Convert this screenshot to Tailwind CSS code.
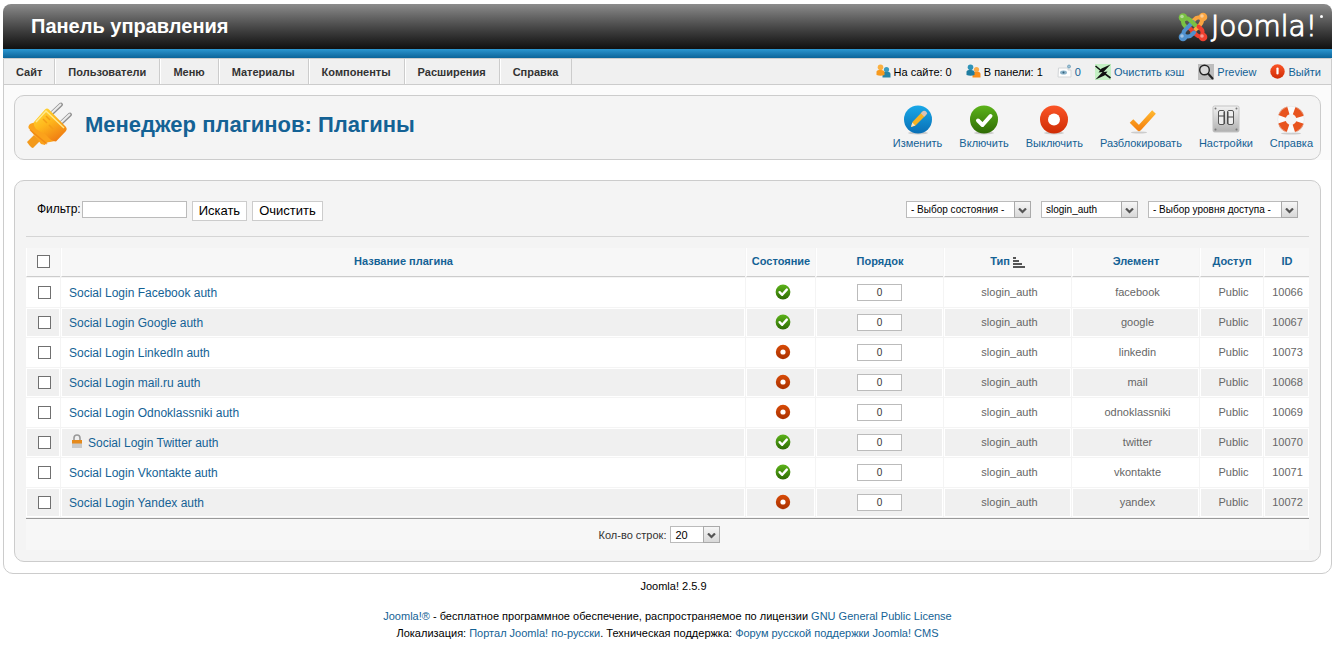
<!DOCTYPE html>
<html lang="ru">
<head>
<meta charset="utf-8">
<title>Менеджер плагинов: Плагины</title>
<script src="https://cdn.jsdelivr.net/npm/@tailwindcss/browser@4"></script>
</head>
<body class="bg-white pt-1 pr-[2px] pl-[3px] font-['Liberation_Sans',Arial,sans-serif] text-[11px] leading-4 text-black">

<svg class="absolute size-0" aria-hidden="true">
  <defs>
    <linearGradient id="gGreen" x1="0" y1="0" x2="0" y2="1"><stop offset="0" stop-color="#5cb31a"/><stop offset="1" stop-color="#2f6b04"/></linearGradient>
    <linearGradient id="gRed" x1="0" y1="0" x2="0" y2="1"><stop offset="0" stop-color="#fb5527"/><stop offset="1" stop-color="#cf2c05"/></linearGradient>
    <linearGradient id="gRust" x1="0" y1="0" x2="0" y2="1"><stop offset="0" stop-color="#d84a06"/><stop offset="1" stop-color="#a93202"/></linearGradient>
    <linearGradient id="gBlue" x1="0" y1="0" x2="0" y2="1"><stop offset="0" stop-color="#18a8e8"/><stop offset="1" stop-color="#0a6fb5"/></linearGradient>
    <linearGradient id="gOrange" x1="0" y1="0" x2="0" y2="1"><stop offset="0" stop-color="#ffb52e"/><stop offset="1" stop-color="#f58410"/></linearGradient>
    <linearGradient id="gYellow" x1="0" y1="0" x2="0.6" y2="1"><stop offset="0" stop-color="#ffdc3c"/><stop offset="0.5" stop-color="#ffb81c"/><stop offset="1" stop-color="#f07f13"/></linearGradient>
    <linearGradient id="gSteel" x1="0" y1="0" x2="0" y2="1"><stop offset="0" stop-color="#f2f2f2"/><stop offset="1" stop-color="#b0b0b0"/></linearGradient>
    <symbol id="published" viewBox="0 0 16 16"><circle cx="8" cy="8" r="7.4" fill="url(#gGreen)"/><path d="M4.6 8.2 7.2 10.8 11.8 5.6" fill="none" stroke="#fff" stroke-width="2.4" stroke-linecap="round" stroke-linejoin="round"/></symbol>
    <symbol id="disabled" viewBox="0 0 16 16"><circle cx="8" cy="8" r="7.2" fill="url(#gRust)"/><circle cx="8" cy="8" r="2.6" fill="#fff"/></symbol>
    <symbol id="chevron" viewBox="0 0 9 6"><path d="M1 .5 4.500 4 8 .5" fill="none" stroke="#555" stroke-width="2.200"/></symbol>
  </defs>
</svg>

<header class="flex h-[45px] items-center justify-between rounded-t-lg bg-linear-to-b from-[#8c8c8c] to-[#111111] pr-[9px] pl-7">
  <h1 class="pb-0.5 text-xl font-bold text-white">Панель управления</h1>
  <a href="#" class="flex items-center gap-[3px] text-white" aria-label="Joomla!">
    <svg class="size-[30px]" viewBox="0 0 30 30" fill="none" stroke-width="4" stroke-linecap="round" stroke-linejoin="round">
      <path d="M5 6 V10 Q5 12 7 14 L9 16 M5 7.500 Q9 5 12 8 L20 16" stroke="#7ac143"/>
      <path d="M24 5.500 H20 Q18 5.500 16 8 L14 10 M23.500 6 Q25 10 22 13 L14.500 20.500" stroke="#f9a541"/>
      <path d="M25 24.500 Q21 25.500 18 22.500 L10.500 15 M24.500 24 V21 Q25 18 22 16 L20.500 14.500" stroke="#f0402f"/>
      <path d="M5.500 24.500 Q4.500 20 8 17 L15 10 M6 24.500 H9 Q12 25 14 22.500 L16 20.500" stroke="#5091cd"/>
      <path d="M12 8 L17 13" stroke="#7ac143"/>
      <circle cx="5" cy="5.500" r="4.300" fill="#7ac143"/><circle cx="25" cy="5" r="4.300" fill="#f9a541"/>
      <circle cx="25" cy="25" r="4.300" fill="#f0402f"/><circle cx="5" cy="25" r="4.300" fill="#5091cd"/>
      <g fill="#fff" opacity=".45"><circle cx="4" cy="4.500" r="1.800"/><circle cx="24" cy="4" r="1.800"/><circle cx="24" cy="24" r="1.800"/><circle cx="4" cy="24" r="1.800"/></g>
    </svg>
    <span class="font-['DejaVu_Sans',sans-serif] text-[28px] leading-8 font-extralight [-webkit-text-stroke:1px_white]">Joomla!</span>
    <span class="mt-1 size-[3px] self-start rounded-full bg-white"></span>
  </a>
</header>
<div class="h-[9px] bg-linear-to-b from-[#2c97d1] to-[#0b6499]"></div>

<div class="rounded-b-[10px] border border-[#cccccc] bg-white">
  <div class="flex h-[26px] items-stretch justify-between border-b border-[#cccccc] bg-[#f0f0f0]">
    <nav class="flex font-bold text-[#333333]">
      <a href="#" class="flex items-center border-r border-[#cccccc] pr-3 pl-3">Сайт</a>
      <a href="#" class="flex items-center border-r border-l border-r-[#cccccc] border-l-white pr-[13px] pl-3">Пользователи</a>
      <a href="#" class="flex items-center border-r border-l border-r-[#cccccc] border-l-white pr-[13px] pl-3">Меню</a>
      <a href="#" class="flex items-center border-r border-l border-r-[#cccccc] border-l-white pr-[13px] pl-3">Материалы</a>
      <a href="#" class="flex items-center border-r border-l border-r-[#cccccc] border-l-white pr-[13px] pl-3">Компоненты</a>
      <a href="#" class="flex items-center border-r border-l border-r-[#cccccc] border-l-white pr-[13px] pl-3">Расширения</a>
      <a href="#" class="flex items-center border-r border-l border-r-[#cccccc] border-l-white pr-[13px] pl-3">Справка</a>
    </nav>
    <div class="flex items-center gap-[14px] pr-[10px]">
      <span class="flex items-center gap-[3px]">
        <svg class="size-[15px]" viewBox="0 0 15 15"><path d="M6.500 13.500V9.500Q6.500 7.500 10.500 7.500T14.500 10V13.500Z" fill="#2585a8"/><circle cx="10.500" cy="5.500" r="2.600" fill="#3a9cc0"/><path d="M.5 11V7.500Q1 5.500 4 6 8 5.500 8.500 8V11Q4.500 12.500.5 11Z" fill="#f79a1e"/><circle cx="4.500" cy="3.300" r="2.800" fill="#fbb040"/></svg>На сайте: 0</span>
      <span class="flex items-center gap-[3px]">
        <svg class="size-[15px]" viewBox="0 0 15 15"><path d="M6.500 13.500V9.500Q6.500 7.500 10.500 7.500T14.500 10V13.500Z" fill="#f98e1b"/><circle cx="10.500" cy="5.500" r="2.600" fill="#fbac4b"/><path d="M.5 11V7.500Q1 5.500 4 6 8 5.500 8.500 8V11Q4.500 12.500.5 11Z" fill="#1f7ca0"/><circle cx="4.500" cy="3.300" r="2.800" fill="#2f93b8"/></svg>В панели: 1</span>
      <a href="#" class="flex items-center gap-[3px] text-[#146295]">
        <svg class="size-[15px]" viewBox="0 0 15 15"><path d="M1.500 4H11V6H14V13H1Z" fill="#fdfdfd" stroke="#d3d6d8"/><ellipse cx="6.500" cy="8.500" rx="3.500" ry="2" fill="#8db4ca"/><circle cx="6.500" cy="8.500" r="1" fill="#33617c"/><circle cx="12" cy="2.500" r="1.500" fill="#9fc2d6" stroke="#5f93b0" stroke-width=".7"/></svg>0</a>
      <a href="#" class="flex items-center gap-[3px] text-[#146295]">
        <svg class="size-4" viewBox="0 0 16 16"><rect width="16" height="16" fill="#c4f0c4"/><path d="M15.500.5 6.500 4.500 3.500 8.500 7.500 8 .5 15.500 9.500 11.500 12.500 7.500 8.500 8Z" fill="#111"/><path d="M.5 2 6.500 7M9.500 9.500 15.500 14" stroke="#111" stroke-width="1.600"/></svg>Очистить кэш</a>
      <a href="#" class="flex items-center gap-[3px] text-[#146295]">
        <svg class="size-4" viewBox="0 0 16 16"><rect width="16" height="16" fill="#bdbdbd"/><circle cx="6.500" cy="6" r="4.800" fill="#d9d9d9" stroke="#222" stroke-width="1.400"/><path d="M10 9.500 15 15" stroke="#222" stroke-width="2"/></svg>Preview</a>
      <a href="#" class="flex items-center gap-[3px] text-[#146295]">
        <svg class="size-[15px]" viewBox="0 0 15 15"><circle cx="7.500" cy="7.500" r="7.200" fill="url(#gRed)"/><path d="M7.500 4.500V9.500" stroke="#fff" stroke-width="2.200" stroke-linecap="round"/></svg>Выйти</a>
    </div>
  </div>

  <div class="bg-[#fbfbfb] px-[10px] pt-[10px]">
    <div class="flex h-[65px] items-start justify-between rounded-[10px] border border-[#cccccc] bg-[#f4f4f4] pr-[7px] pl-[10px]">
      <div class="flex items-center gap-3 pt-[5px]">
        <svg class="size-12" viewBox="0 0 48 48">
          <path d="M27 12 36 3.500M36 22 45 13.500" stroke="#8f8f8f" stroke-width="4" stroke-linecap="round"/>
          <path d="M26.500 12 35.500 3.500M35.500 22 44.500 13.500" stroke="#ececec" stroke-width="2" stroke-linecap="round"/>
          <path d="M2 41 9 34 15 40 8 47Q6 47 2 41Z" fill="#f39a1c"/>
          <path d="M3.500 27Q3 24 6 22.500L11 21 30 40 25 41Q21 41 20 44L16 43 9 34Z" fill="#fba21b"/>
          <path d="M5 29 22 43" stroke="#ea7a12" stroke-width="1.500" opacity=".6"/>
          <path d="M9 21 20 8.500Q22 6.500 24 8.500L41 26Q42.500 28 41 30L31 40.500Q26 40 21 34L11 28Q8 24 9 21Z" fill="url(#gYellow)"/>
          <path d="M11 21 21 10 39 27" fill="none" stroke="#ffe98c" stroke-width="1.500"/>
          <path d="M18 18 22 22M21 15 25 19M24 24 28 28" stroke="#f49d16" stroke-width="1.500"/>
        </svg>
        <h2 class="text-[22px] font-bold text-[#146295]">Менеджер плагинов: Плагины</h2>
      </div>
      <div class="flex gap-[17px] pt-2 leading-[14px] text-[#146295]">
        <a href="#" class="flex flex-col items-center">
          <svg class="size-8" viewBox="0 0 32 32"><ellipse cx="16" cy="29" rx="10" ry="1.500" fill="#ccc"/><circle cx="16" cy="15.500" r="14" fill="url(#gBlue)"/><path d="M9 23 10.500 18 20.500 7.500 24 11 13.500 21.500Z" fill="#f7b321"/><path d="M18.800 9.300 21 7Q23 6 24.500 8 26 9.500 24.500 10.500L22.200 12.800Z" fill="#d8c3b8"/><path d="M9 23 10.300 18.500 13.300 21.500Z" fill="#f4e2c5"/></svg>Изменить</a>
        <a href="#" class="flex flex-col items-center">
          <svg class="size-8" viewBox="0 0 32 32"><ellipse cx="16" cy="29" rx="10" ry="1.500" fill="#ccc"/><circle cx="16" cy="15.500" r="14" fill="url(#gGreen)"/><path d="M10 16.500 14.500 21 22.500 12" fill="none" stroke="#fff" stroke-width="4" stroke-linecap="round" stroke-linejoin="round"/></svg>Включить</a>
        <a href="#" class="flex flex-col items-center">
          <svg class="size-8" viewBox="0 0 32 32"><ellipse cx="16" cy="29" rx="10" ry="1.500" fill="#ccc"/><circle cx="16" cy="15.500" r="14" fill="url(#gRed)"/><circle cx="16" cy="15.500" r="6" fill="#fff"/></svg>Выключить</a>
        <a href="#" class="flex flex-col items-center">
          <svg class="size-8" viewBox="0 0 32 32"><ellipse cx="14" cy="28.500" rx="8" ry="1" fill="#ccc"/><path d="M6.500 17 14 24.500 29 8" fill="none" stroke="url(#gOrange)" stroke-width="5" stroke-linejoin="round"/></svg>Разблокировать</a>
        <a href="#" class="flex flex-col items-center">
          <svg class="size-8" viewBox="0 0 32 32"><rect x="3" y="2" width="26" height="26" rx="1.500" fill="url(#gSteel)" stroke="#c4c4c4"/><rect x="8.500" y="6.500" width="6" height="14" rx="1.500" fill="#eee" stroke="#555"/><rect x="17.500" y="6.500" width="6" height="14" rx="1.500" fill="#eee" stroke="#555"/><path d="M9 12H14M18 13H23M14 8V20M18 8V20" stroke="#444"/><g fill="#777"><circle cx="5.500" cy="4.500" r="1"/><circle cx="26.500" cy="4.500" r="1"/><circle cx="5.500" cy="25.500" r="1"/><circle cx="26.500" cy="25.500" r="1"/></g></svg>Настройки</a>
        <a href="#" class="flex flex-col items-center">
          <svg class="size-8" viewBox="0 0 32 32"><ellipse cx="16" cy="29.500" rx="10" ry="1" fill="#ccc"/><circle cx="16" cy="15.500" r="9.500" fill="none" stroke="#fafafa" stroke-width="8"/><circle cx="16" cy="15.500" r="9.500" fill="none" stroke="#e8541e" stroke-width="8" stroke-dasharray="8.900 6.023" stroke-dashoffset="-3"/><circle cx="16" cy="15.500" r="13.300" fill="none" stroke="#ddd" stroke-width=".5"/></svg>Справка</a>
      </div>
    </div>
  </div>

  <main class="mx-[10px] mt-5 mb-[11px] rounded-[10px] border border-[#cccccc] bg-[#f4f4f4] px-[11px] pb-[10px]">
    <form class="flex h-14 items-start justify-between border-b border-[#d5d5d5] pt-5 pr-[11px] pl-[11px]">
      <div class="flex items-start">
        <label for="search" class="pr-px text-xs">Фильтр:</label>
        <input id="search" type="text" class="h-[17px] w-[105px] border border-[#bbbbbb] bg-white px-1">
        <button type="button" class="ml-[5px] h-5 border border-[#cccccc] bg-white px-1.5 text-[13px] leading-4">Искать</button>
        <button type="button" class="ml-[5px] h-5 border border-[#cccccc] bg-white px-1.5 text-[13px] leading-4">Очистить</button>
      </div>
      <div class="flex gap-[10px] text-[10px]">
        <div class="relative"><select aria-label="Состояние" class="h-[17px] w-[125px] appearance-none border border-[#bbbbbb] bg-white pl-1 leading-3"><option>- Выбор состояния -</option></select>
          <span class="pointer-events-none absolute inset-y-0 right-0 flex w-[17px] items-center justify-center border border-[#aaaaaa] bg-linear-to-b from-[#f6f6f6] to-[#d9d9d9] pt-0.5"><svg class="h-1.5 w-[9px]"><use href="#chevron"/></svg></span></div>
        <div class="relative"><select aria-label="Тип" class="h-[17px] w-[97px] appearance-none border border-[#bbbbbb] bg-white pl-1 leading-3"><option>slogin_auth</option></select>
          <span class="pointer-events-none absolute inset-y-0 right-0 flex w-[17px] items-center justify-center border border-[#aaaaaa] bg-linear-to-b from-[#f6f6f6] to-[#d9d9d9] pt-0.5"><svg class="h-1.5 w-[9px]"><use href="#chevron"/></svg></span></div>
        <div class="relative"><select aria-label="Уровень доступа" class="h-[17px] w-[150px] appearance-none border border-[#bbbbbb] bg-white pl-1 leading-3"><option>- Выбор уровня доступа -</option></select>
          <span class="pointer-events-none absolute inset-y-0 right-0 flex w-[17px] items-center justify-center border border-[#aaaaaa] bg-linear-to-b from-[#f6f6f6] to-[#d9d9d9] pt-0.5"><svg class="h-1.5 w-[9px]"><use href="#chevron"/></svg></span></div>
      </div>
    </form>

    <div class="-mx-px mt-[10px]">
    <table class="w-full table-fixed border-separate border-spacing-x-px border-spacing-y-px text-center text-[#666666]">
      <colgroup><col class="w-[34px]"><col><col class="w-[69px]"><col class="w-[127px]"><col class="w-[127px]"><col class="w-[127px]"><col class="w-[63px]"><col class="w-[45px]"></colgroup>
      <thead>
        <tr class="h-[29px] text-[#146295] [&_th]:border-b [&_th]:border-l [&_th]:border-b-[#cccccc] [&_th]:border-l-white [&_th]:bg-[#f7f7f7] [&_th]:p-0 [&_th]:pb-0.5">
          <th><input type="checkbox" aria-label="Выбрать все" class="mx-auto block size-[13px] appearance-none border border-[#707070] bg-white"></th>
          <th><a href="#">Название плагина</a></th>
          <th><a href="#">Состояние</a></th>
          <th><a href="#">Порядок</a></th>
          <th><a href="#" class="flex items-center justify-center gap-[3px]">Тип <svg class="mt-0.5 h-3 w-[13px]" viewBox="0 0 13 12" fill="#555"><path d="M0 1H3V3H0ZM0 4H6V6H0ZM0 7H9V9H0ZM0 10H12V12H0Z"/></svg></a></th>
          <th><a href="#">Элемент</a></th>
          <th><a href="#">Доступ</a></th>
          <th><a href="#">ID</a></th>
        </tr>
      </thead>
      <tbody id="plugins" class="[&_td]:border [&_td]:border-white [&_td]:bg-white [&_tr:nth-child(even)_td]:bg-[#f0f0f0]"></tbody>
      <tfoot>
        <tr><td colspan="8" class="h-8 border-t border-[#999999] bg-[#f7f7f7] p-0">
          <div class="flex items-center justify-center gap-1 pr-4 text-[#333333]">
            <label for="limit">Кол-во строк:</label>
            <div class="relative"><select id="limit" class="block h-[17px] w-[50px] appearance-none border border-[#bbbbbb] bg-white pl-1 leading-3 text-black"><option>20</option></select>
              <span class="pointer-events-none absolute inset-y-0 right-0 flex w-[17px] items-center justify-center border border-[#aaaaaa] bg-linear-to-b from-[#f6f6f6] to-[#d9d9d9] pt-0.5"><svg class="h-1.5 w-[9px]"><use href="#chevron"/></svg></span></div>
          </div>
        </td></tr>
      </tfoot>
    </table>
    </div>
  </main>
</div>

<footer class="pt-1 text-center">
  <p class="pl-3">Joomla! 2.5.9</p>
  <p class="mt-[14px] leading-[17px]"><a href="#" class="text-[#146295]">Joomla!®</a> - бесплатное программное обеспечение, распространяемое по лицензии <a href="#" class="text-[#146295]">GNU General Public License</a></p>
  <p class="leading-[17px]">Локализация: <a href="#" class="text-[#146295]">Портал Joomla! по-русски</a>. Техническая поддержка: <a href="#" class="text-[#146295]">Форум русской поддержки Joomla! CMS</a></p>
</footer>

<script>
  const plugins = [
    ['Facebook', 'facebook', 10066, true],
    ['Google', 'google', 10067, true],
    ['LinkedIn', 'linkedin', 10073, false],
    ['mail.ru', 'mail', 10068, false],
    ['Odnoklassniki', 'odnoklassniki', 10069, false],
    ['Twitter', 'twitter', 10070, true, true],
    ['Vkontakte', 'vkontakte', 10071, true],
    ['Yandex', 'yandex', 10072, false],
  ];
  const lock = '<svg class="mr-[5px] mb-1 ml-0.5 inline-block h-[14px] w-3" viewBox="0 0 12 14"><path d="M3 7V4Q3 1 6 1T9 4V7" fill="none" stroke="#9a9a9a" stroke-width="1.600"/><rect x="1" y="6" width="10" height="8" fill="#c9c9c9"/><rect x="1" y="6" width="10" height="3.500" fill="#e58a1c"/></svg>';
  document.getElementById('plugins').innerHTML = plugins.map(([name, element, id, enabled, locked]) => `
    <tr class="h-[29px]">
      <td class="p-0"><input type="checkbox" aria-label="Social Login ${name} auth" class="ml-[11px] block size-[13px] appearance-none border border-[#707070] bg-white"></td>
      <td class="p-0 text-left text-xs"><div class="flex items-center pl-[7px]">${locked ? lock : ''}<a href="#" class="text-[#146295]">Social Login ${name} auth</a></div></td>
      <td class="p-0 pb-0.5 pl-1"><svg class="mx-auto block size-4">${enabled ? '<use href="#published"/>' : '<use href="#disabled"/>'}</svg></td>
      <td class="p-0"><input type="text" value="0" aria-label="Порядок" class="mx-auto block h-[17px] w-[45px] border border-[#bbbbbb] bg-white text-center text-[10px] text-[#333333]"></td>
      <td class="p-0 pb-0.5 pl-1">slogin_auth</td>
      <td class="p-0 pb-0.5 pl-1">${element}</td>
      <td class="p-0 pb-0.5 pl-1">Public</td>
      <td class="p-0 pb-0.5 pl-0.5">${id}</td>
    </tr>`).join('');
</script>
</body>
</html>
